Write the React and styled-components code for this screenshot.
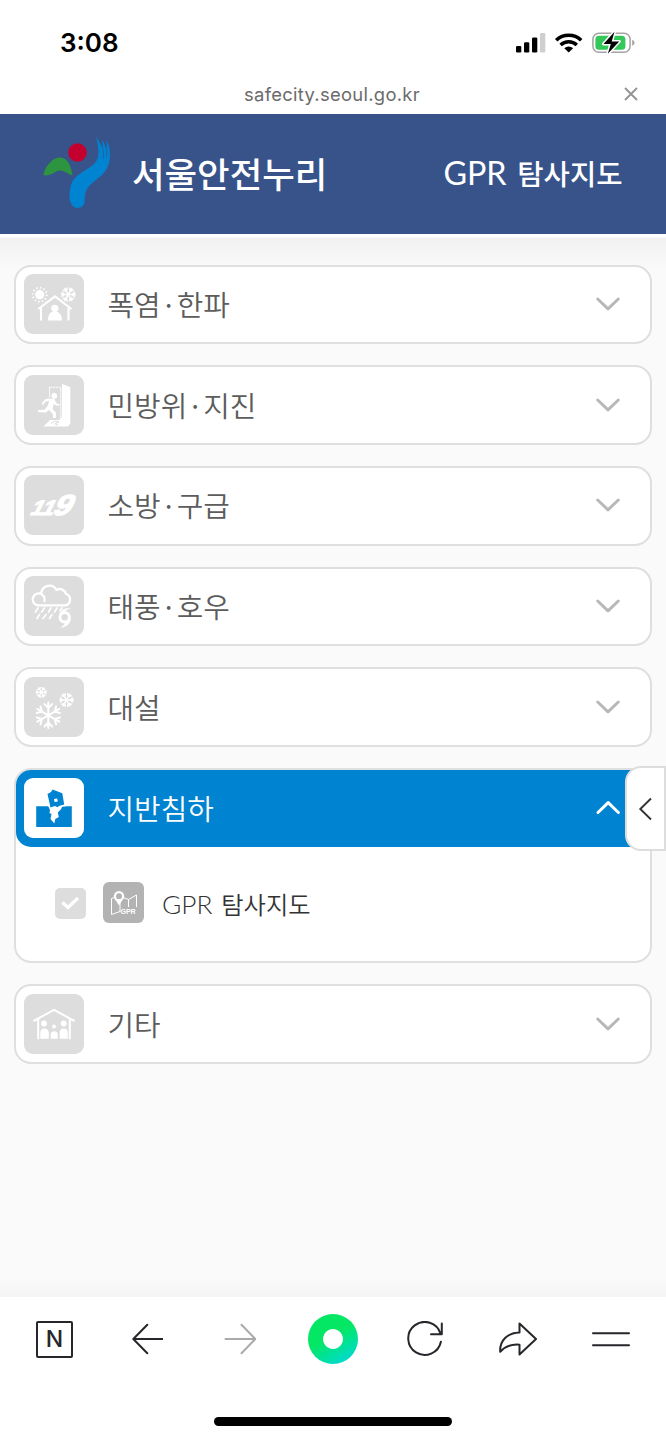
import styled, { createGlobalStyle } from "styled-components"
import { useState } from "react";

const kr = `"Noto Sans CJK KR", sans-serif`

const menus = [
  { id: "heat", title: "폭염·한파", icon: HeatIcon },
  { id: "defense", title: "민방위·지진", icon: ExitIcon },
  { id: "fire", title: "소방·구급", icon: FireIcon },
  { id: "storm", title: "태풍·호우", icon: StormIcon },
  { id: "snow", title: "대설", icon: SnowIcon },
  { id: "ground", title: "지반침하", icon: GroundIcon },
  { id: "etc", title: "기타", icon: EtcIcon },
]

function Flake({ x, y, r, w = 1.2 }) {
  return (
    <g transform={`translate(${x} ${y})`} stroke="currentColor" strokeWidth={w} fill="none" strokeLinecap="round">
      {[0, 60, 120, 180, 240, 300].map((a) => (
        <path key={a} transform={`rotate(${a + 30})`} d={`M0 0V${-r} M${-r * 0.3} ${-r * 0.88}L0 ${-r * 0.58}L${r * 0.3} ${-r * 0.88}`} />
      ))}
    </g>
  )
}

function HeatIcon() {
  return (
    <svg viewBox="0 0 60 60" fill="currentColor">
      <circle cx="15.7" cy="20.7" r="4.6" />
      <circle cx="15.7" cy="20.7" r="7" fill="none" stroke="currentColor" strokeWidth="1.9" strokeDasharray="1.4 2.26" />
      <Flake x={44.3} y={20.5} r={7} w={1.5} />
      <path d="M14.3 35L31 22.3L47.5 35M17 34V46.5M44.5 34V46.5" fill="none" stroke="currentColor" strokeWidth="2.1" />
      <circle cx="30.8" cy="34.3" r="3.6" />
      <path d="M24 46.4Q24 38.4 29 37.5H32.6Q37.6 38.4 38 46.4Z" />
    </svg>
  )
}

function ExitIcon() {
  return (
    <svg viewBox="0 0 60 60" fill="currentColor">
      <path d="M25.5 22V12.3H36.8V44" fill="none" stroke="currentColor" strokeWidth="1.1" strokeDasharray="2 .7" />
      <path d="M38 9L46.3 12V48.5L44 51.5H19.5L26 45H35L38 42Z" />
      <path d="M27 48.5L31 46L35 47L31 48.8L34 50" stroke="#dddddd" fill="none" strokeWidth="1" />
      <circle cx="30.2" cy="20.8" r="2.9" />
      <path d="M24 23.5L30.5 24L32.2 28L35.5 29.5L35 31L31 30L29.8 28.6L28.6 34L32 38L31.8 43L29 43L28.8 39L25 35L21.7 37.5L14 37V35L20.5 34.7L23.5 31L25.2 26L21.8 26.5L19 30L17.5 29L20.7 24.4Z" />
    </svg>
  )
}

function FireIcon() {
  return (
    <svg viewBox="0 0 60 60" fill="currentColor" overflow="visible">
      <g transform="translate(5 40.3) skewX(-27)" fontFamily="Liberation Sans" fontWeight="700" stroke="currentColor" strokeWidth="1.2">
        <text x="0" y="0" fontSize="21" textLength="23" lengthAdjust="spacingAndGlyphs">11</text>
        <text x="22" y="0" fontSize="29" textLength="18" lengthAdjust="spacingAndGlyphs">9</text>
      </g>
    </svg>
  )
}

function StormIcon() {
  return (
    <svg viewBox="0 0 60 60" fill="none" stroke="currentColor" strokeLinecap="round">
      <path strokeWidth="2.3" d="M20.5 25A6 6 0 1 0 16 29.3H41A5.8 5.8 0 0 0 42 18A6.6 6.6 0 0 0 32.5 13.8A8.2 8.2 0 0 0 17.3 16.7" />
      <path strokeWidth="1.7" d="M14 32L11.5 36M20.5 32L17.5 36M27 32L24.5 36M33 32L30.5 36M38 32L36 34.5M15.5 38.5L13 42.5M22 38.5L19 42.5M28 38.5L25.5 42.5" />
      <circle cx="40.7" cy="41.3" r="4.7" strokeWidth="3" />
      <path d="M47 32Q35 32 35 41L38 37Q41 34.5 47 32ZM46.8 42Q47 50 36 52Q41 49 41.5 46Z" fill="currentColor" stroke="none" />
    </svg>
  )
}

function SnowIcon() {
  return (
    <svg viewBox="0 0 60 60">
      <Flake x={17.3} y={15.3} r={5.2} w={1.3} />
      <Flake x={42.5} y={23} r={6.8} w={1.5} />
      <g transform="rotate(30 24.3 38.3)">
        <Flake x={24.3} y={38.3} r={12.7} w={2} />
      </g>
    </svg>
  )
}

function GroundIcon() {
  return (
    <svg viewBox="0 0 60 60" fill="#0083d0">
      <path d="M12.2 28.3H47.8V49H12.2Z" />
      <path fill="#fff" d="M23.7 27L26 32L25.5 35L27.5 36L26.5 41L30.3 45.5L31.3 41L34.8 39L33.8 34.5L37.2 31L38 28.8L42 28.2V27Z" />
      <path d="M23.5 16L27 14L28.5 11.5L38.3 15.2L40.2 26.4L35 28L33.5 29.3L31 28L26.5 29.5Z" />
      <path fill="#fff" d="M30 21L33.2 20.4L33.8 23.4L30.6 24Z" />
    </svg>
  )
}

function EtcIcon() {
  return (
    <svg viewBox="0 0 60 60" fill="currentColor">
      <path d="M9.5 27L30 15.8L50.5 27M14.2 25V45.3M45.8 25V45.3" fill="none" stroke="currentColor" strokeWidth="2" />
      <circle cx="20" cy="29.5" r="2.9" />
      <circle cx="30" cy="32.5" r="2" />
      <circle cx="39.7" cy="29.5" r="2.9" />
      <path d="M16.3 44.8V38Q17 34.6 20.3 34.6T24.8 38V44.8ZM35.7 44.8V38Q36.4 34.6 39.8 34.6T43.8 38V44.8ZM26.7 44.8V40Q27.2 37.2 30.2 37.2T33.7 40V44.8Z" />
    </svg>
  )
}

function Logo() {
  return (
    <svg width="68" height="74" viewBox="0 0 68 74">
      <circle cx="34.5" cy="18.5" r="9.3" fill="#c4002f" />
      <path fill="#2d9540" d="M.6 39C4 30 10 23.5 17 23.5C25 23.5 28 32 29.5 41.5C24 39.5 21 36.5 17 36.5C12 37 8 42 2 41.5Q0 41 .6 39Z" />
      <path fill="#0083d0" d="M26.5 62C26.5 70 30.5 74 34.5 74C39 74 42 70.5 41.7 66C41.5 57 45 52 51 47.5C60 40.5 67 35 67 21C67 14 65.5 10 63.5 6.5L64 14L59 5.5L60 14L53 2.5C55.5 13 57.5 23 52 29C45 36.5 30 40 27.5 53C26.8 56 26.5 59 26.5 62Z" />
      <path stroke="#375389" strokeWidth=".7" fill="none" d="M57 8Q62 16 60 25M61 8Q65 16 63.5 23" />
    </svg>
  )
}

function StatusIcons() {
  return (
    <svg width="120" height="24" viewBox="0 0 120 24">
      <rect x="0" y="15" width="5.3" height="6.5" rx="1.3" />
      <rect x="8" y="11.2" width="5.3" height="10.3" rx="1.3" />
      <rect x="16" y="6.5" width="5.3" height="15" rx="1.3" />
      <rect x="24" y="2" width="5.3" height="19.5" rx="1.3" fill="#cfcfcf" />
      <path d="M40.2 9.2A18.3 18.3 0 0 1 65.2 9.2" fill="none" stroke="#000" strokeWidth="3.6" />
      <path d="M44.6 14A12 12 0 0 1 60.8 14" fill="none" stroke="#000" strokeWidth="3.5" />
      <path d="M48.3 17.2A6.5 6.5 0 0 1 57.1 17.2L52.7 21.6Z" />
      <rect x="76.9" y="2.3" width="37.2" height="19" rx="6" fill="none" stroke="#a4a4a4" strokeWidth="1.5" />
      <rect x="79.4" y="4.8" width="30" height="14" rx="3.5" fill="#34c759" />
      <path d="M116.2 8.8Q118.6 9.8 118.6 11.8T116.2 14.8Z" fill="#a4a4a4" />
      <path d="M98.5 .8L87.5 13H94.8L91.8 22.8L103.2 10.4H95.7Z" stroke="#fff" strokeWidth="3" paintOrder="stroke" strokeLinejoin="round" />
    </svg>
  )
}

function MapIcon() {
  return (
    <svg width="41" height="41" viewBox="0 0 41 41" fill="none" stroke="#fff">
      <path strokeWidth="1" d="M12.5 15L8.5 16.5V32.5L17 29.5M20 15.5L25.5 17.5L33.5 13V25M17 20V30M25.5 17.5V25" />
      <circle cx="16" cy="14.3" r="4.1" strokeWidth="2.2" />
      <path d="M12 17L16 23.5L20 17Z" fill="#fff" stroke="none" />
      <text x="17.5" y="32" fontSize="7" fontWeight="700" fontFamily="Liberation Sans" fill="#fff" stroke="none">GPR</text>
    </svg>
  )
}

function Chevron({ up }) {
  return (
    <svg width="26" height="16" viewBox="0 0 26 16" fill="none" stroke={up ? "#fff" : "#b8b8b8"} strokeWidth="3" strokeLinecap="round" strokeLinejoin="round">
      <path d={up ? "M3 12.5L13.2 2.7L23.4 12.5" : "M2.7 3L13 12.8L23.3 3"} />
    </svg>
  )
}

//item do menu
function Menu({ menu, open, onClick }) {
  const Icon = menu.icon
  return (
    <Card>
      <CardHead $open={open} onClick={onClick}>
        <Tile $open={open}><Icon /></Tile>
        <CardTitle $open={open}>{menu.title}</CardTitle>
        <Chevron up={open} />
      </CardHead>
      {open ? <Layer>
        <Check>
          <svg width="31" height="31" viewBox="0 0 31 31" fill="none" stroke="#fff" strokeWidth="3.2"><path d="M7.5 14.5L13 19.5L23 10" /></svg>
        </Check>
        <LayerIcon><MapIcon /></LayerIcon>
        <LayerName><Latin>GPR</Latin>탐사지도</LayerName>
      </Layer> : ""}
    </Card>
  )
}

export default function App() {
  const [opened, setOpened] = useState("ground")

  return (
    <>
      <GlobalStyle />
      <Screen>
        <StatusBar>
          <Clock>3:08</Clock>
          <StatusIcons />
        </StatusBar>
        <UrlBar>
          <Url>safecity.seoul.go.kr</Url>
          <svg width="14" height="14" viewBox="0 0 14 14" stroke="#929292" strokeWidth="1.8"><path d="M1 1L13 13M13 1L1 13" /></svg>
        </UrlBar>
        <Header>
          <Logo />
          <SiteName>서울안전누리</SiteName>
          <PageName><Latin>GPR</Latin>탐사지도</PageName>
        </Header>
        <Content>
          {menus.map((menu) => (
            <Menu
              key={menu.id}
              menu={menu}
              open={opened === menu.id}
              onClick={() => setOpened(opened === menu.id ? "" : menu.id)}
            />
          ))}
          <SideTab>
            <svg width="15" height="24" viewBox="0 0 15 24" fill="none" stroke="#333" strokeWidth="1.9"><path d="M13 1.5L2.3 12L13 22.5" /></svg>
          </SideTab>
        </Content>
        <Toolbar>
          <Tool><NBox>N</NBox></Tool>
          <Tool>
            <svg width="32" height="32" viewBox="0 0 32 32"><path d="M31.8 16H2.8M16.3 1.8L2.3 16L16.3 30.2" /></svg>
          </Tool>
          <Tool $off>
            <svg width="32" height="32" viewBox="0 0 32 32"><path d="M1.5 16H31M17.5 1.8L31.3 16L17.5 30.2" /></svg>
          </Tool>
          <Tool><GreenDot /></Tool>
          <Tool>
            <svg width="38" height="36" viewBox="0 0 38 36"><path d="M33.9 20.8A16.5 16.5 0 1 1 33.5 12.6M34.8 2.5V13.3H24" /></svg>
          </Tool>
          <Tool>
            <svg width="39" height="34" viewBox="0 0 39 34"><path d="M20.5 1.5L37 17L20.5 32.5V22.7C12 22 6 24.3 1.2 29.8C.5 18.5 8.5 10.7 20.5 10.5Z" /></svg>
          </Tool>
          <Tool>
            <svg width="40" height="16" viewBox="0 0 40 16"><path d="M1 2.3H37M1 14.3H37" /></svg>
          </Tool>
        </Toolbar>
        <HomeArea><HomeLine /></HomeArea>
      </Screen>
    </>
  )
}

const GlobalStyle = createGlobalStyle`
*{
  box-sizing: border-box;
}
body{
  margin: 0;
  background: #ffffff;
}
svg{
  display: block;
  flex: none;
}
`
const Screen = styled.div`
width: 666px;
height: 1440px;
overflow: hidden;
display: flex;
flex-direction: column;
background: #ffffff;
font-family: ${kr};
`
const StatusBar = styled.div`
height: 74px;
padding: 12px 30px 0 60px;
display: flex;
align-items: center;
justify-content: space-between;
`
const Clock = styled.div`
font-family: Inter, sans-serif;
font-weight: 600;
font-size: 26px;
line-height: 32px;
color: #000000;
`
const UrlBar = styled.div`
height: 40px;
padding: 0 28px 0 40px;
display: flex;
align-items: center;
`
const Url = styled.div`
flex: 1;
padding-bottom: 1px;
text-align: center;
font-family: Inter, sans-serif;
font-size: 18.4px;
letter-spacing: 0.3px;
color: #6b6b6b;
`
const Header = styled.div`
height: 120px;
padding: 0 43.5px 6px 43px;
display: flex;
align-items: center;
color: #ffffff;
background: #375389;
`
const SiteName = styled.div`
flex: 1;
margin-left: 21px;
padding-top: 3px;
font-weight: 500;
font-size: 35.4px;
line-height: 50px;
`
const Latin = styled.span`
font-family: Lato, sans-serif;
margin-right: 0.33em;
`
const PageName = styled.div`
padding-top: 3px;
font-weight: 500;
font-size: 28.6px;
line-height: 40px;
${Latin}{
  font-size: 32.3px;
  font-weight: 400;
}
`
const Content = styled.div`
position: relative;
height: 1063px;
padding: 30.9px 14.4px 0 14px;
display: flex;
flex-direction: column;
gap: 21px;
background: linear-gradient(#ffffff 0, #ffffff 3px, #f1f1f1 4px, #f4f4f4 16px, #fafafa 36px, #fafafa 1043px, #f4f4f5 1063px);
`
const Card = styled.div`
flex: none;
border: 2px solid #dfdfdf;
border-radius: 17px;
background: #ffffff;
`
const CardHead = styled.div`
height: ${(props) => (props.$open ? "77px" : "75.6px")};
padding: 0 29px 1px 8px;
display: flex;
align-items: center;
border-radius: 15px;
background: ${(props) => (props.$open ? "#0083d0" : "transparent")};
cursor: pointer;
`
const Tile = styled.div`
width: 60px;
height: 60px;
border-radius: 9px;
color: #ffffff;
background: ${(props) => (props.$open ? "#ffffff" : "#dddddd")};
`
const CardTitle = styled.div`
flex: 1;
margin-left: 23.5px;
padding-bottom: 2px;
font-weight: 350;
font-size: 28.9px;
line-height: 42px;
color: ${(props) => (props.$open ? "#ffffff" : "#5c5c5c")};
`
const Layer = styled.div`
height: 114.6px;
padding: 0 0 3px 39px;
display: flex;
align-items: center;
`
const Check = styled.div`
width: 31px;
height: 31px;
margin-top: 2px;
border-radius: 5px;
background: #dddddd;
`
const LayerIcon = styled.div`
width: 41px;
height: 41px;
margin-left: 17px;
border-radius: 6px;
background: #b3b3b3;
`
const LayerName = styled.div`
margin-left: 18px;
padding-top: 2px;
font-weight: 350;
font-size: 24.3px;
line-height: 34px;
color: #333333;
${Latin}{
  font-size: 26.3px;
}
`
//aba presa na lateral
const SideTab = styled.div`
position: absolute;
top: 532px;
right: 0;
width: 41px;
height: 85px;
display: flex;
align-items: center;
justify-content: center;
border: 2px solid #dddddd;
border-radius: 16px 0 0 16px;
background: #ffffff;
`
const Toolbar = styled.div`
height: 84px;
padding: 0 8px;
display: grid;
grid-template-columns: repeat(7, 1fr);
align-items: center;
`
const Tool = styled.div`
display: flex;
justify-content: center;
svg{
  fill: none;
  stroke: ${(props) => (props.$off ? "#aaaaaa" : "#25272b")};
  stroke-width: 2;
  stroke-linejoin: round;
  stroke-linecap: round;
}
`
const NBox = styled.div`
width: 37px;
height: 37px;
display: flex;
align-items: center;
justify-content: center;
border: 2px solid #25272b;
border-radius: 2px;
font-family: Inter, sans-serif;
font-weight: 500;
font-size: 23px;
color: #25272b;
`
const GreenDot = styled.div`
width: 50px;
height: 50px;
border-radius: 50%;
background: radial-gradient(circle, #ffffff 9.5px, transparent 10.3px), linear-gradient(150deg, #03e765 45%, #00dfae 75%, #00d2f0 100%);
`
const HomeArea = styled.div`
height: 59px;
padding-top: 36px;
display: flex;
justify-content: center;
`
const HomeLine = styled.div`
width: 238px;
height: 9px;
border-radius: 5px;
background: #000000;
`
